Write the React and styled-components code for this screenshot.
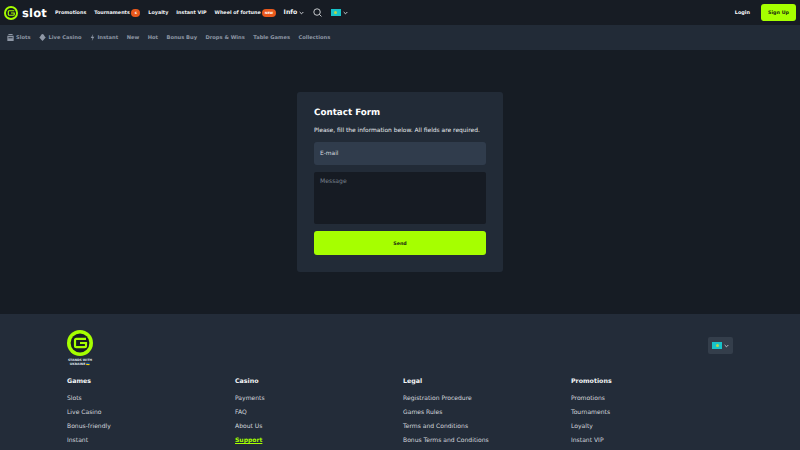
import React from "react";
import styled, { createGlobalStyle } from "styled-components";

const Global = createGlobalStyle`
  html, body { margin: 0; padding: 0; background: #161c24; }
  body {
    font-family: "DejaVu Sans", "Liberation Sans", sans-serif;
    overflow: hidden;
    text-rendering: geometricPrecision;
  }
  * { box-sizing: border-box; }
`;

const Page = styled.div`
  width: 800px;
  height: 450px;
  overflow: hidden;
  display: flex;
  flex-direction: column;
`;

const TopBar = styled.header`
  height: 25px;
  background: #171c24;
  display: flex;
  align-items: center;
  padding: 0 4px;
`;

const Brand = styled.div`
  display: flex;
  align-items: center;
  gap: 4px;
  width: 51px;
`;

const BrandName = styled.span`
  color: #fff;
  font-size: 11.5px;
  font-weight: 700;
  letter-spacing: 0.2px;
`;

const TopNav = styled.nav`
  display: flex;
  align-items: center;
  gap: 8px;
`;

const TopLink = styled.a`
  display: flex;
  align-items: center;
  gap: 1.5px;
  color: #f0f2f5;
  font-size: ${(p) => (p.$big ? "6.2px" : "4.85px")};
  font-weight: 700;
  white-space: nowrap;
`;

const Badge = styled.span`
  display: inline-flex;
  align-items: center;
  justify-content: center;
  height: 8px;
  min-width: 9px;
  padding: 0 ${(p) => (p.$wide ? "2.5px" : "0")};
  border-radius: 4px;
  background: #e9591c;
  color: #fff;
  font-size: 3.2px;
  font-weight: 700;
`;

const IconButton = styled.span`
  display: flex;
  align-items: center;
  gap: 2px;
  color: #eef0f3;
  margin-left: ${(p) => p.$gap || 0}px;
`;

const Flag = styled.span`
  display: block;
  width: 10px;
  height: 7px;
  background: #17c3c9;
  position: relative;
  &::after {
    content: "";
    position: absolute;
    left: 50%;
    top: 50%;
    width: 3px;
    height: 3px;
    margin: -1.5px 0 0 -1.5px;
    border-radius: 50%;
    background: #b9d64a;
  }
`;

const AuthBox = styled.div`
  margin-left: auto;
  display: flex;
  align-items: center;
  gap: 11px;
`;

const Login = styled.a`
  color: #fff;
  font-size: 4.9px;
  font-weight: 700;
`;

const SignUp = styled.button`
  width: 35px;
  height: 17px;
  border: none;
  border-radius: 3px;
  background: #a6ff00;
  color: #1a2a10;
  font-family: inherit;
  font-size: 4.8px;
  font-weight: 700;
  padding: 0;
`;

const SubBar = styled.nav`
  height: 25px;
  background: #222b37;
  display: flex;
  align-items: center;
  gap: 8.5px;
  padding: 0 6.5px;
`;

const SubLink = styled.a`
  display: flex;
  align-items: center;
  gap: 2.5px;
  color: #8e97a5;
  font-size: 5.15px;
  font-weight: 700;
  white-space: nowrap;
`;

const Main = styled.main`
  height: 264px;
  background: #161c24;
  display: flex;
  justify-content: center;
  padding-top: 42px;
`;

const Card = styled.section`
  width: 206px;
  height: 180px;
  background: #222b37;
  border-radius: 3px;
  padding: 15px 17px 0;
  display: flex;
  flex-direction: column;
`;

const Title = styled.h1`
  margin: 0;
  color: #fff;
  font-size: 8.75px;
  line-height: 12px;
  font-weight: 700;
`;

const Hint = styled.p`
  margin: 6.5px 0 0;
  color: #e8ebef;
  font-size: 5.95px;
  line-height: 10px;
  font-weight: 400;
  white-space: nowrap;
`;

const EmailField = styled.div`
  height: 23px;
  margin-top: 6.5px;
  padding-left: 6px;
  background: #303c4c;
  border-radius: 3px;
  display: flex;
  align-items: center;
  color: #d5d9df;
  font-size: 5.9px;
`;

const MessageField = styled.div`
  height: 52px;
  margin-top: 7px;
  padding: 5.5px 6px;
  background: #161b23;
  border-radius: 2px;
  color: #77808c;
  font-size: 6.1px;
  line-height: 8px;
`;

const SendButton = styled.button`
  height: 24px;
  margin-top: 7px;
  border: none;
  border-radius: 3px;
  background: #a6ff00;
  color: #1b2a12;
  font-family: inherit;
  font-size: 4.8px;
  font-weight: 700;
`;

const Footer = styled.footer`
  height: 136px;
  background: #232c39;
  padding: 16px 67px 0 67px;
`;

const FooterTop = styled.div`
  display: flex;
  justify-content: space-between;
  align-items: flex-start;
  height: 43px;
`;

const Stand = styled.div`
  width: 26px;
  display: flex;
  flex-direction: column;
  align-items: center;
`;

const StandText = styled.span`
  margin-top: 2px;
  color: #dfe3e8;
  font-size: 3.1px;
  line-height: 4px;
  font-weight: 700;
  text-align: center;
  white-space: nowrap;
`;

const LangButton = styled.div`
  margin-top: 7px;
  width: 25px;
  height: 17px;
  background: #343e4b;
  border-radius: 2px;
  display: flex;
  align-items: center;
  justify-content: center;
  gap: 2px;
  color: #d5d9df;
`;

const Columns = styled.div`
  display: grid;
  grid-template-columns: repeat(4, 168px);
  margin-top: 2px;
`;

const Column = styled.div`
  display: flex;
  flex-direction: column;
`;

const ColumnTitle = styled.h3`
  margin: 0 0 3px;
  color: #f2f4f6;
  font-size: 6.3px;
  line-height: 14px;
  font-weight: 700;
`;

const FooterLink = styled.a`
  color: ${(p) => (p.$active ? "#a6ff00" : "#d3d7dd")};
  text-decoration: ${(p) => (p.$active ? "underline" : "none")};
  font-size: 6.05px;
  font-weight: ${(p) => (p.$active ? 700 : 400)};
  line-height: 14.1px;
  white-space: nowrap;
`;

const Logo = ({ size }) => (
  <svg width={size} height={size} viewBox="0 0 26 26">
    <circle cx="13" cy="13" r="13" fill="#a6ff00" />
    <circle cx="13" cy="13" r="9.4" fill="#161c24" />
    <path d="M19 8.8H9.4A1.4 1.4 0 0 0 8 10.2v5.6a1.4 1.4 0 0 0 1.4 1.4h8.2a1.4 1.4 0 0 0 1.4-1.4v-2.8h-6" fill="none" stroke="#a6ff00" strokeWidth="2.2" />
  </svg>
);

const Chevron = () => (
  <svg width="5" height="4" viewBox="0 0 6 4" fill="none" stroke="currentColor" strokeWidth="1">
    <path d="M.8.8 3 3l2.2-2.2" />
  </svg>
);

const SlotsIcon = () => (
  <svg width="7" height="7" viewBox="0 0 10 10" fill="#8e97a5">
    <path d="M2 0h6v1.5H2zM.5 2.5h9V10h-9zM2 4.5v1.5h6V4.5z" fillRule="evenodd" />
  </svg>
);

const CasinoIcon = () => (
  <svg width="7" height="7" viewBox="0 0 10 10" fill="#8e97a5">
    <path d="M5 0 9.6 5 5 10 .4 5z" />
    <circle cx="5" cy="3" r="2.6" />
  </svg>
);

const BoltIcon = () => (
  <svg width="5" height="7" viewBox="0 0 6 10" fill="#8e97a5">
    <path d="M4 0 .5 5.6H3L2 10l3.6-6H3z" />
  </svg>
);

const footerColumns = [
  { title: "Games", links: ["Slots", "Live Casino", "Bonus-friendly", "Instant"] },
  { title: "Casino", links: ["Payments", "FAQ", "About Us", "Support"] },
  { title: "Legal", links: ["Registration Procedure", "Games Rules", "Terms and Conditions", "Bonus Terms and Conditions"] },
  { title: "Promotions", links: ["Promotions", "Tournaments", "Loyalty", "Instant VIP"] },
];

export default function App() {
  return (
    <Page>
      <Global />
      <TopBar>
        <Brand>
          <Logo size={14} />
          <BrandName>slot</BrandName>
        </Brand>
        <TopNav>
          <TopLink>Promotions</TopLink>
          <TopLink>Tournaments <Badge>6</Badge></TopLink>
          <TopLink>Loyalty</TopLink>
          <TopLink>Instant VIP</TopLink>
          <TopLink>Wheel of fortune <Badge $wide>NEW</Badge></TopLink>
          <TopLink $big>Info <Chevron /></TopLink>
        </TopNav>
        <IconButton $gap={9}>
          <svg width="9" height="9" viewBox="0 0 10 10" fill="none" stroke="currentColor" strokeWidth="0.9">
            <circle cx="4.5" cy="4.5" r="3.6" />
            <path d="M7.2 7.2 9.4 9.4" />
          </svg>
        </IconButton>
        <IconButton $gap={9}>
          <Flag />
          <Chevron />
        </IconButton>
        <AuthBox>
          <Login>Login</Login>
          <SignUp>Sign Up</SignUp>
        </AuthBox>
      </TopBar>
      <SubBar>
        <SubLink><SlotsIcon /> Slots</SubLink>
        <SubLink><CasinoIcon /> Live Casino</SubLink>
        <SubLink><BoltIcon /> Instant</SubLink>
        <SubLink>New</SubLink>
        <SubLink>Hot</SubLink>
        <SubLink>Bonus Buy</SubLink>
        <SubLink>Drops &amp; Wins</SubLink>
        <SubLink>Table Games</SubLink>
        <SubLink>Collections</SubLink>
      </SubBar>
      <Main>
        <Card>
          <Title>Contact Form</Title>
          <Hint>Please, fill the information below. All fields are required.</Hint>
          <EmailField>E-mail</EmailField>
          <MessageField>Message</MessageField>
          <SendButton>Send</SendButton>
        </Card>
      </Main>
      <Footer>
        <FooterTop>
          <Stand>
            <Logo size={26} />
            <StandText>STANDS WITH<br />UKRAINE 🇺🇦</StandText>
          </Stand>
          <LangButton>
            <Flag />
            <Chevron />
          </LangButton>
        </FooterTop>
        <Columns>
          {footerColumns.map((col) => (
            <Column key={col.title}>
              <ColumnTitle>{col.title}</ColumnTitle>
              {col.links.map((l) => (
                <FooterLink key={l} $active={l === "Support"}>{l}</FooterLink>
              ))}
            </Column>
          ))}
        </Columns>
      </Footer>
    </Page>
  );
}
